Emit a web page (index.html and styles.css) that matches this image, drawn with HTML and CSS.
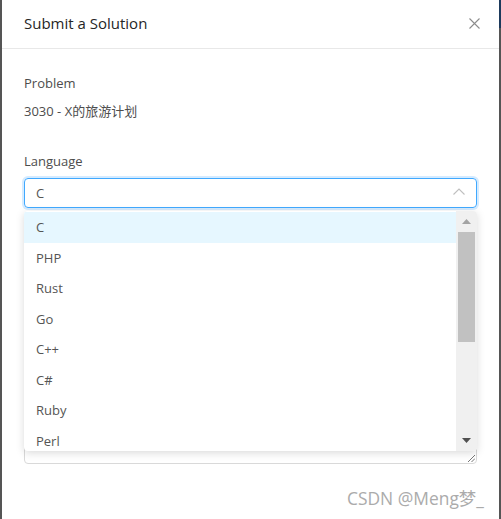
FILE: index.html
```html
<!DOCTYPE html>
<html>
<head>
<meta charset="utf-8">
<link rel="stylesheet" href="styles.css">
</head>
<body>
<div class="screen">
  <div class="edge edge-left"></div>
  <div class="modal">
    <div class="modal-header">
      <div class="modal-title">Submit a Solution</div>
      <svg class="close" width="11" height="11" viewBox="0 0 11 11"><path d="M0.5 0.5 L10.5 10.5 M10.5 0.5 L0.5 10.5" stroke="#8c8c8c" stroke-width="1.1" fill="none"/></svg>
    </div>
    <div class="modal-body">
      <div class="form-item">
        <div class="label">Problem</div>
        <div class="value">3030 - X的旅游计划</div>
      </div>
      <div class="form-item lang">
        <div class="label">Language</div>
        <div class="select">
          <span class="select-value">C</span>
          <svg class="chev" width="12" height="7" viewBox="0 0 12 7"><path d="M0.5 6.5 L6 1 L11.5 6.5" stroke="#bfbfbf" stroke-width="1.1" fill="none"/></svg>
        </div>
        <div class="dropdown">
          <div class="options">
            <div class="option active">C</div>
            <div class="option">PHP</div>
            <div class="option">Rust</div>
            <div class="option">Go</div>
            <div class="option">C++</div>
            <div class="option">C#</div>
            <div class="option">Ruby</div>
            <div class="option">Perl</div>
          </div>
          <div class="scrollbar">
            <div class="sb-btn"><svg width="9" height="5" viewBox="0 0 9 5"><path d="M0 5 L4.5 0 L9 5 Z" fill="#a3a3a3"/></svg></div>
            <div class="sb-track"><div class="sb-thumb"></div></div>
            <div class="sb-btn"><svg width="9" height="5" viewBox="0 0 9 5"><path d="M0 0 L4.5 5 L9 0 Z" fill="#505050"/></svg></div>
          </div>
        </div>
        <div class="textarea">
          <svg class="grip" width="7" height="7" viewBox="0 0 7 7"><path d="M7 0 L0 7 M7 3.5 L3.5 7" stroke="#777" stroke-width="1" fill="none"/></svg>
        </div>
      </div>
    </div>
  </div>
  <div class="edge edge-right"></div>
  <div class="watermark">CSDN @Meng梦_</div>
</div>
</body>
</html>
```
FILE: styles.css
```css
html, body {
  margin: 0;
  padding: 0;
}
body {
  width: 501px;
  height: 519px;
  overflow: hidden;
  font-family: "Open Sans", "Noto Sans CJK SC", sans-serif;
  color: #4d4d4d;
}
.screen {
  display: flex;
  width: 501px;
  height: 519px;
  position: relative;
}
.edge {
  width: 2px;
  flex: none;
  background: #555;
}
.edge-right {
  background: linear-gradient(to bottom, #1d3a5c 0, #1d3a5c 28px, #555 28px);
}
.modal {
  flex: 1;
  background: #fff;
}
.modal-header {
  height: 49px;
  border-bottom: 1px solid #e8e8e8;
  box-sizing: border-box;
  display: flex;
  align-items: center;
  justify-content: space-between;
  padding: 0 19px 0 22px;
}
.modal-title {
  font-size: 15px;
  font-weight: 500;
  color: #262626;
  margin-top: -3px;
}
.close {
  display: block;
  margin-top: -1px;
}
.modal-body {
  padding: 24px 22px 0 22px;
}
.label, .value {
  font-size: 13px;
  line-height: 20px;
  height: 20px;
}
.value {
  margin-top: 8px;
}
.lang {
  margin-top: 30px;
  position: relative;
}
.select {
  margin-top: 7px;
  height: 30px;
  box-sizing: border-box;
  border: 1px solid #40a9ff;
  border-radius: 4px;
  box-shadow: 0 0 0 2px rgba(24, 144, 255, 0.18);
  display: flex;
  align-items: center;
  justify-content: space-between;
  padding: 0 11px 0 11px;
  font-size: 13px;
}
.select-value {
  color: #555;
}
.chev {
  display: block;
  margin-top: -3px;
}
.dropdown {
  position: absolute;
  left: 0;
  right: 0;
  top: 60px;
  height: 240px;
  background: #fff;
  border-radius: 4px;
  box-shadow: 0 2px 8px rgba(0, 0, 0, 0.15);
  display: flex;
  overflow: hidden;
  z-index: 2;
}
.options {
  flex: 1;
  padding-top: 1px;
}
.option {
  height: 30.5px;
  line-height: 30.5px;
  padding: 0 12px;
  font-size: 13px;
  color: #555;
}
.option.active {
  background: #e6f7ff;
}
.scrollbar {
  width: 21px;
  flex: none;
  background: #f0f0f0;
  display: flex;
  flex-direction: column;
}
.sb-btn {
  height: 21px;
  display: flex;
  align-items: center;
  justify-content: center;
}
.sb-track {
  flex: 1;
  padding: 0 2px;
}
.sb-thumb {
  height: 110px;
  background: #c1c1c1;
}
.textarea {
  margin-top: 24px;
  height: 232px;
  box-sizing: border-box;
  border: 1px solid #d9d9d9;
  border-radius: 4px;
  position: relative;
}
.grip {
  position: absolute;
  right: 1px;
  bottom: 1px;
}
.watermark {
  position: absolute;
  left: 347px;
  top: 486px;
  font-size: 17.4px;
  line-height: 24px;
  color: #ababab;
  font-family: "Open Sans", "Noto Sans CJK SC", sans-serif;
  white-space: nowrap;
}
```
